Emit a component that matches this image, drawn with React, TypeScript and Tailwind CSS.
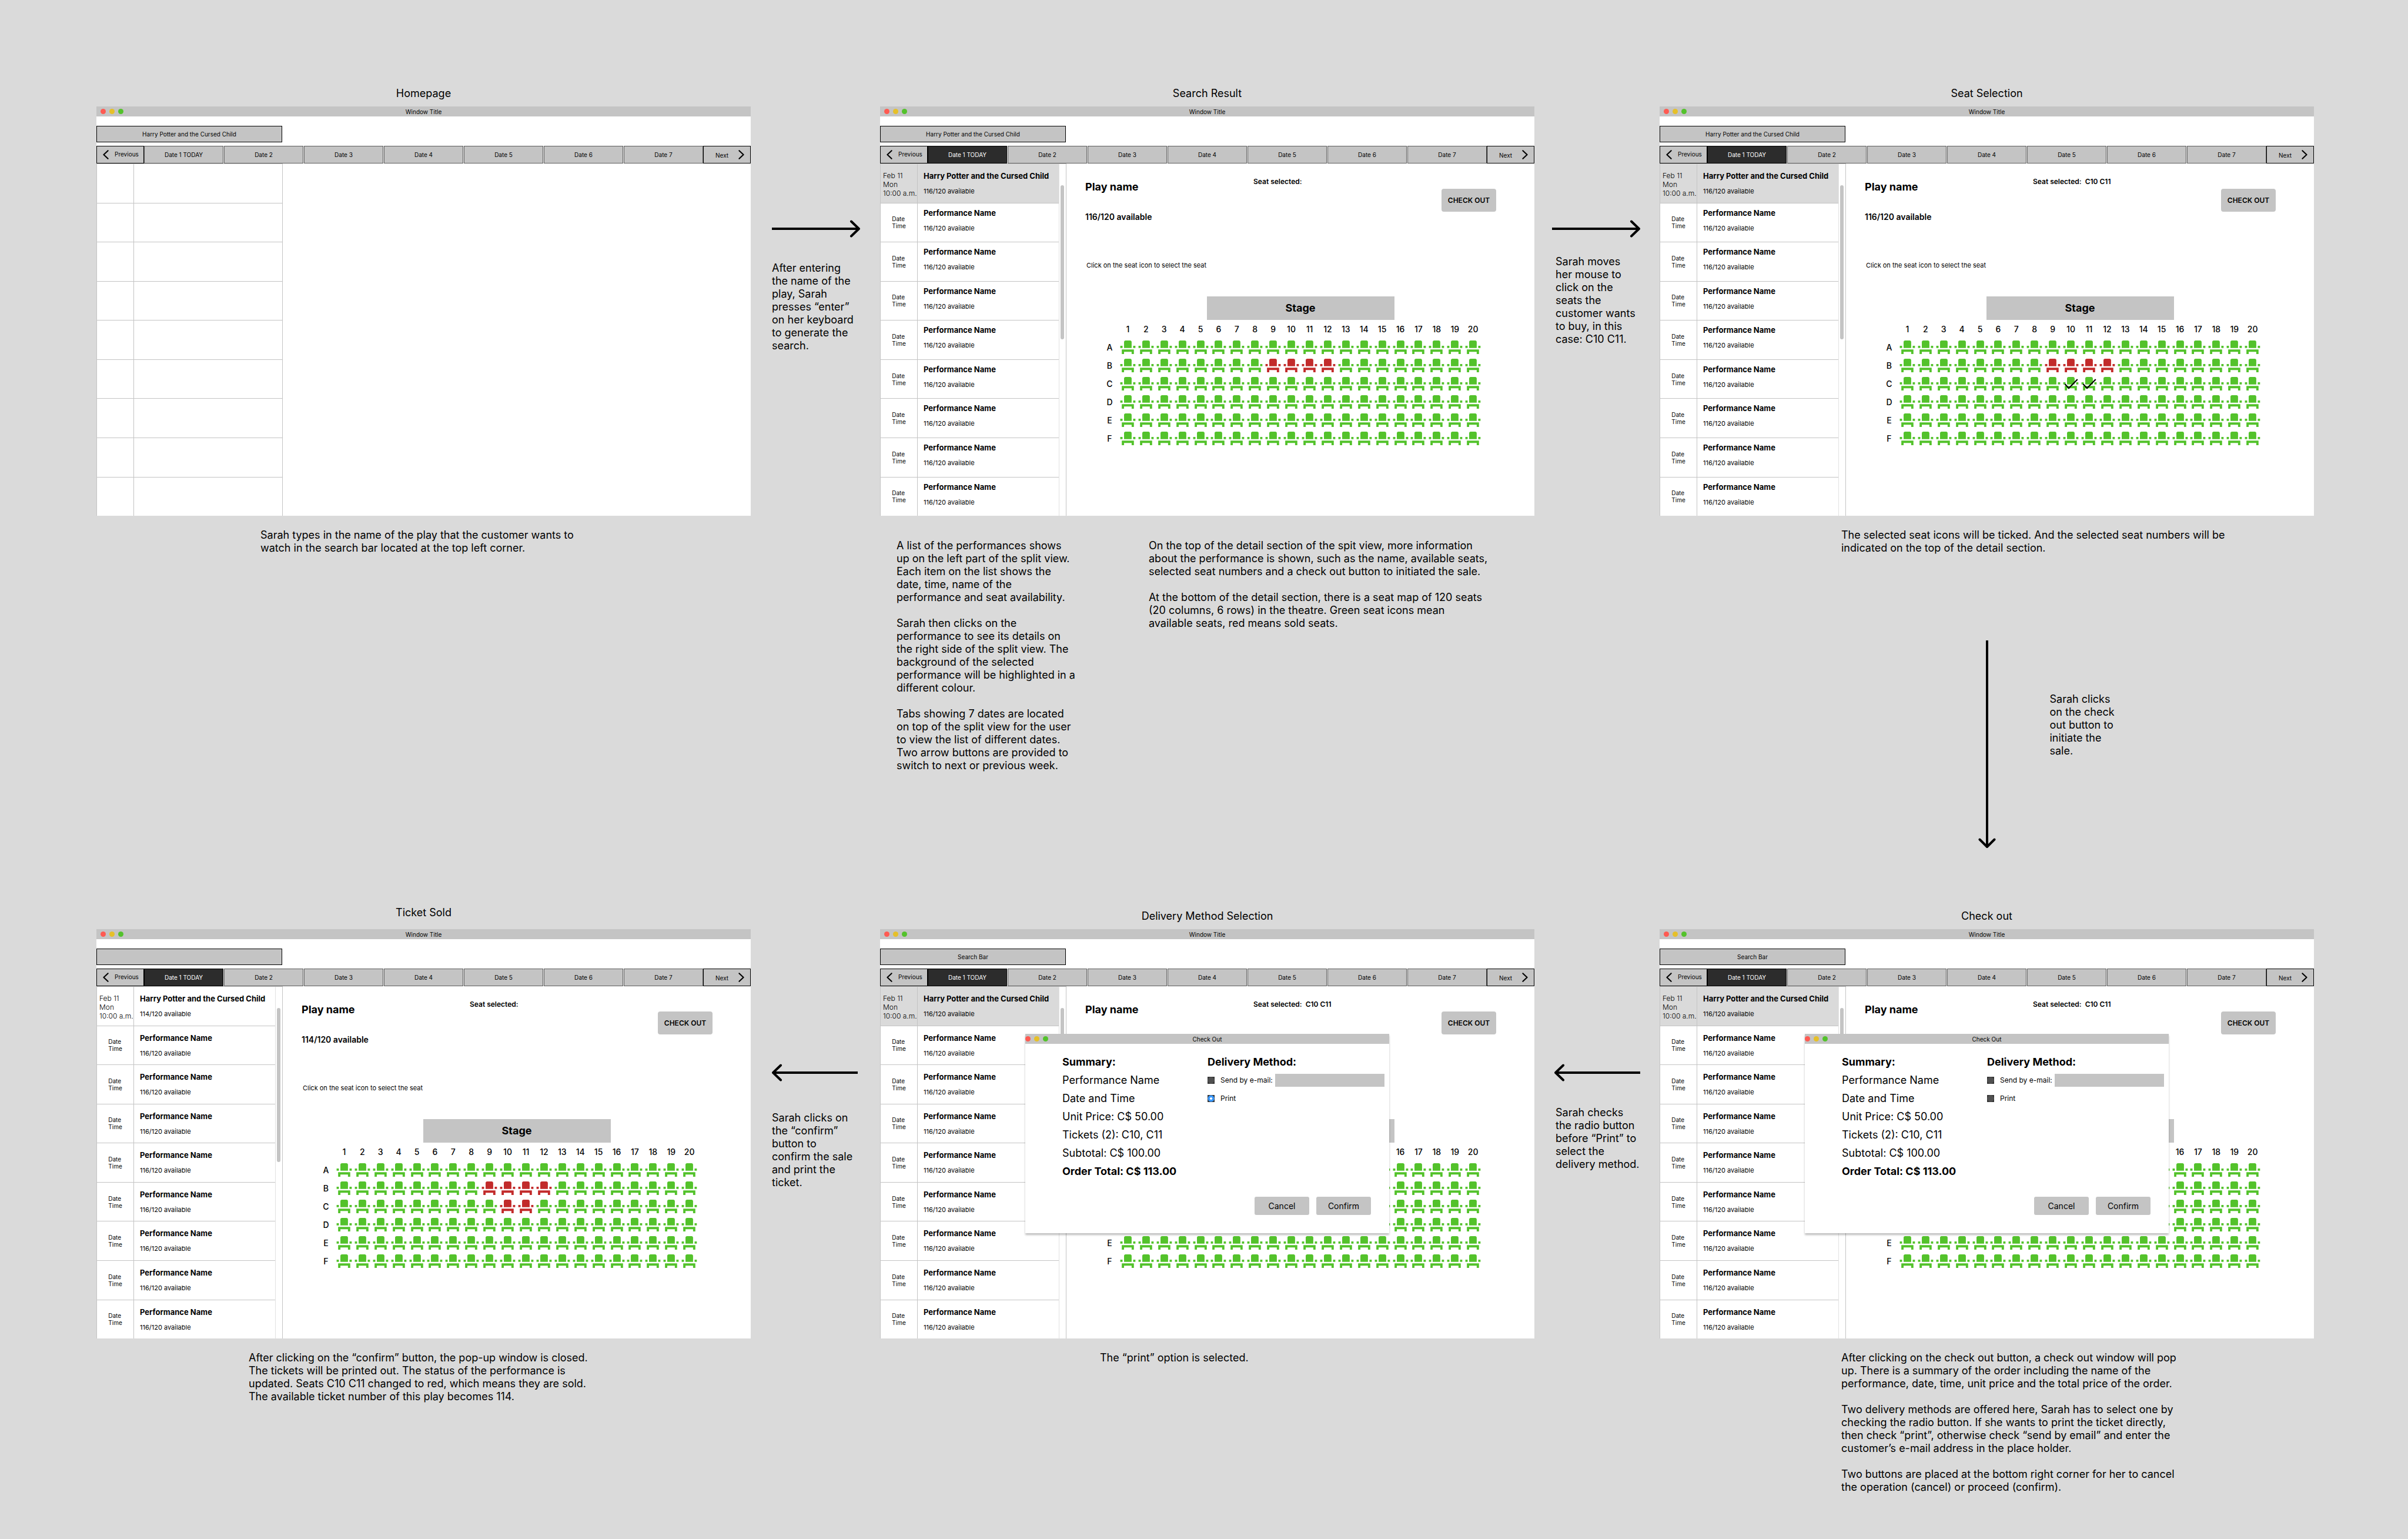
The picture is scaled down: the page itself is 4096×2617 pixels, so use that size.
import React, { useId } from "react";

type FrameKind = "home" | "result" | "selection" | "checkout" | "delivery" | "sold";

const COLUMNS = Array.from({ length: 20 }, (_, i) => i + 1);
const ROWS = ["A", "B", "C", "D", "E", "F"];
const DATES = ["Date 1 TODAY", "Date 2", "Date 3", "Date 4", "Date 5", "Date 6", "Date 7"];

function TrafficLights() {
  return (
    <div className="absolute inset-y-0 left-0 flex items-center gap-1.5">
      <span className="size-[9px] rounded-full bg-[#ff5a52]" />
      <span className="size-[9px] rounded-full bg-[#e6c029]" />
      <span className="size-[9px] rounded-full bg-[#53c22b]" />
    </div>
  );
}

function TitleBar({ title, inset }: { title: string; inset?: boolean }) {
  return (
    <div className="h-[17px] bg-[#c4c4c4] px-[7px]">
      <div className={inset ? "relative flex h-full items-center justify-center" : "relative -mx-[7px] flex h-full items-center justify-center"}>
        <TrafficLights />
        <span className="text-[10px] leading-3">{title}</span>
      </div>
    </div>
  );
}

function Chevron({ flip }: { flip?: boolean }) {
  return (
    <svg viewBox="0 0 12 20" className="h-4 w-2.5 shrink-0" fill="none" stroke="black" strokeWidth="2.6" strokeLinecap="round" strokeLinejoin="round" aria-hidden="true">
      <path d={flip ? "M1.5 1.5 L10.5 10 L1.5 18.5" : "M10.5 1.5 L1.5 10 L10.5 18.5"} />
    </svg>
  );
}

function DateTabs({ active }: { active: boolean }) {
  return (
    <div className="flex h-[30px] text-[10px]">
      <button className="flex w-[81px] items-center gap-2.5 border border-black bg-[#c4c4c4] pl-2.5">
        <Chevron />
        <span className="pb-0.5">Previous</span>
      </button>
      <div className="flex flex-1 gap-px">
        {DATES.map((d, i) => (
          <button
            key={d}
            className={
              active && i === 0
                ? "flex-1 border border-black bg-[#2c2c2c] text-white"
                : "flex-1 border border-[#5c5c5c] bg-[#c4c4c4]"
            }
          >
            {d}
          </button>
        ))}
      </div>
      <button className="flex w-[81px] items-center justify-between border border-black bg-[#c4c4c4] pr-2.5 pl-5">
        <span className="pt-0.5">Next</span>
        <Chevron flip />
      </button>
    </div>
  );
}

function EmptyList() {
  return (
    <ul className="flex w-[317px] shrink-0 flex-col border border-b-0 border-[#c4c4c4]">
      {Array.from({ length: 9 }, (_, i) => (
        <li key={i} className="flex flex-1 border-b border-[#c4c4c4] last:border-b-0">
          <div className="w-[63px] border-r border-[#c4c4c4]" />
        </li>
      ))}
    </ul>
  );
}

function PerformanceList({ firstAvailable, highlight, tight }: { firstAvailable: string; highlight: boolean; tight: boolean }) {
  return (
    <div className="flex w-[317px] shrink-0 border border-b-0 border-[#c4c4c4]">
      <ul className="flex flex-1 flex-col border-r border-[#e2e2e2]">
        {Array.from({ length: 9 }, (_, i) => {
          const first = i === 0;
          return (
            <li
              key={i}
              className={
                first && highlight
                  ? "flex flex-1 border-b border-[#c4c4c4] bg-[#dadada]"
                  : "flex flex-1 border-b border-[#c4c4c4] last:border-b-0"
              }
            >
              {first ? (
                <div className="w-[63px] border-r border-[#c4c4c4] pt-3 pl-1 text-xs leading-[15px] font-light whitespace-nowrap">
                  Feb 11
                  <br />
                  Mon
                  <br />
                  10:00 a.m.
                </div>
              ) : (
                <div className="flex w-[63px] items-center justify-center border-r border-[#c4c4c4] text-[10px] leading-3">
                  <div>
                    Date
                    <br />
                    Time
                  </div>
                </div>
              )}
              <div className={tight && !first ? "flex-1 pt-2 pl-2.5 whitespace-nowrap" : "flex-1 pt-3 pl-2.5 whitespace-nowrap"}>
                <h3 className="text-[13px] leading-4 font-bold">
                  {first ? "Harry Potter and the Cursed Child" : "Performance Name"}
                </h3>
                <p className="mt-2.5 text-[11px] leading-4">{first ? firstAvailable : "116/120 available"}</p>
              </div>
            </li>
          );
        })}
      </ul>
      <div className="w-[11px] pt-9 pl-0.5">
        <div className="h-[262px] w-1.5 rounded-full bg-[#c4c4c4]" />
      </div>
    </div>
  );
}

function Seat({ name, sold, ticked }: { name: string; sold: boolean; ticked: boolean }) {
  return (
    <button aria-label={"Seat " + name} className="block h-[31px]">
      <svg viewBox="0 0 24 24" className="size-full" aria-hidden="true">
        <path
          className={sold ? "fill-[#c22b2b]" : "fill-[#53c22b]"}
          d="M4 18v3h3v-3h10v3h3v-6H4zM19 10h3v3h-3zM2 10h3v3H2zM17 13H7V5c0-1.1.9-2 2-2h6c1.1 0 2 .9 2 2z"
        />
        {ticked && <path d="M4.2 12.4 L9.3 18 L20.8 6.2" fill="none" stroke="black" strokeWidth="1.7" />}
      </svg>
    </button>
  );
}

function SeatMap({ sold, ticked }: { sold: string[]; ticked: string[] }) {
  return (
    <div className="mx-auto grid w-[680px] grid-cols-22 text-sm font-medium">
      <span />
      {COLUMNS.map((c) => (
        <span key={c} className="flex h-[31px] items-center justify-center">
          {c}
        </span>
      ))}
      <span />
      {ROWS.map((r) => (
        <React.Fragment key={r}>
          <span className="flex h-[31px] items-center justify-center">{r}</span>
          {COLUMNS.map((c) => (
            <Seat key={c} name={r + c} sold={sold.includes(r + c)} ticked={ticked.includes(r + c)} />
          ))}
          <span />
        </React.Fragment>
      ))}
    </div>
  );
}

function Detail({ available, selected, sold, ticked }: { available: string; selected: string; sold: string[]; ticked: string[] }) {
  return (
    <section className="flex-1">
      <div className="grid grid-cols-[286px_1fr_auto] pr-[65px] pl-8">
        <div className="pt-[26px] whitespace-nowrap">
          <h2 className="text-lg leading-7 font-bold">Play name</h2>
          <p className="mt-[25px] text-sm leading-6 font-semibold">{available}</p>
          <p className="mt-[62px] pl-0.5 text-[11px] leading-4">Click on the seat icon to select the seat</p>
        </div>
        <p className="pt-[23px] text-xs leading-4 font-semibold whitespace-pre">{"Seat selected:  " + selected}</p>
        <div className="pt-[43px]">
          <button className="h-[39px] w-[93px] rounded bg-[#c4c4c4] text-xs font-semibold">CHECK OUT</button>
        </div>
      </div>
      <div className="mx-auto mt-[45px] flex h-10 w-[319px] items-center justify-center bg-[#c4c4c4] text-lg font-bold">
        Stage
      </div>
      <SeatMap sold={sold} ticked={ticked} />
    </section>
  );
}

const radioBase =
  "size-3 shrink-0 appearance-none bg-[#333333] bg-[radial-gradient(circle,#505050_5px,#333333_6px)] checked:bg-[radial-gradient(circle,#ffffff_2px,#3b99fc_2px,#3b99fc_5px,#333333_6px)]";

function CheckoutDialog({ printChecked }: { printChecked: boolean }) {
  const id = useId();
  return (
    <div role="dialog" aria-label="Check Out" className="absolute inset-x-0 top-[178px] mx-auto w-[619px] bg-white shadow-[0_3px_3px_rgba(0,0,0,0.25)]">
      <TitleBar title="Check Out" />
      <div className="grid grid-cols-[247px_minmax(0,1fr)] pt-[15px] pr-2 pl-[63px]">
        <div className="text-lg leading-[31px] whitespace-nowrap">
          <h2 className="font-bold">Summary:</h2>
          <p>Performance Name</p>
          <p>Date and Time</p>
          <p>Unit Price: C$ 50.00</p>
          <p>Tickets (2): C10, C11</p>
          <p>Subtotal: C$ 100.00</p>
          <p className="font-bold">Order Total: C$ 113.00</p>
        </div>
        <div>
          <h2 className="text-lg leading-[31px] font-bold">Delivery Method:</h2>
          <div className="flex h-[31px] items-center text-xs">
            <input type="radio" id={id + "mail"} name={id} className={radioBase} />
            <label htmlFor={id + "mail"} className="w-[103px] shrink-0 pl-2.5 whitespace-nowrap">
              Send by e-mail:
            </label>
            <input type="email" aria-label="E-mail address" className="h-[22px] min-w-0 flex-1 bg-[#c4c4c4]" />
          </div>
          <div className="flex h-[31px] items-center text-xs">
            <input type="radio" id={id + "print"} name={id} defaultChecked={printChecked} className={radioBase} />
            <label htmlFor={id + "print"} className="pl-2.5">
              Print
            </label>
          </div>
        </div>
      </div>
      <div className="mt-7 flex justify-end gap-3 pr-[31px] pb-[31px] text-sm">
        <button className="h-[31px] w-[93px] rounded-[3px] bg-[#c4c4c4]">Cancel</button>
        <button className="h-[31px] w-[93px] rounded-[3px] bg-[#c4c4c4]">Confirm</button>
      </div>
    </div>
  );
}

const SOLD = ["B9", "B10", "B11", "B12"];
const PICKED = ["C10", "C11"];

function AppWindow({ kind, search }: { kind: FrameKind; search: string }) {
  const picked = kind === "selection" || kind === "checkout" || kind === "delivery";
  const available = kind === "sold" ? "114/120 available" : "116/120 available";
  return (
    <div className="relative bg-white">
      <TitleBar title="Window Title" inset />
      <input
        type="text"
        aria-label="Search"
        defaultValue={search}
        className="mt-4 block h-7 w-[316px] border border-black bg-[#c4c4c4] text-center text-[10px]"
      />
      <div className="mt-1.5">
        <DateTabs active={kind !== "home"} />
      </div>
      <div className="flex min-h-[599px]">
        {kind === "home" ? (
          <EmptyList />
        ) : (
          <>
            <PerformanceList
              firstAvailable={available}
              highlight={kind !== "sold"}
              tight={kind === "result" || kind === "selection"}
            />
            <Detail
              available={available}
              selected={picked ? "C10 C11" : ""}
              sold={kind === "sold" ? [...SOLD, ...PICKED] : SOLD}
              ticked={picked ? PICKED : []}
            />
          </>
        )}
      </div>
      {(kind === "checkout" || kind === "delivery") && <CheckoutDialog printChecked={kind === "delivery"} />}
    </div>
  );
}

function RightArrow() {
  return (
    <svg viewBox="0 0 150 30" className="h-[30px] w-[150px]" fill="none" stroke="black" strokeWidth="4" strokeLinejoin="round" aria-hidden="true">
      <path d="M0 15 H148" />
      <path d="M135 2.5 L148 15 L135 27.5" strokeLinecap="round" />
    </svg>
  );
}

function LeftArrow() {
  return (
    <svg viewBox="0 0 146 30" className="h-[30px] w-[146px]" fill="none" stroke="black" strokeWidth="4" strokeLinejoin="round" aria-hidden="true">
      <path d="M146 15 H2" />
      <path d="M15 2.5 L2 15 L15 27.5" strokeLinecap="round" />
    </svg>
  );
}

function DownArrow() {
  return (
    <svg viewBox="0 0 30 354" className="h-[354px] w-[30px]" fill="none" stroke="black" strokeWidth="4" strokeLinejoin="round" aria-hidden="true">
      <path d="M15 0 V351" />
      <path d="M2.5 338.5 L15 351 L27.5 338.5" strokeLinecap="round" />
    </svg>
  );
}

function Note({ text }: { text: string }) {
  return <p className="text-lg leading-[22px] whitespace-pre">{text}</p>;
}

export default function App() {
  return (
    <main className="min-h-screen bg-[#dadada] pt-[147px] pr-[160px] pl-[164px] font-['Inter',sans-serif] text-black [font-optical-sizing:none]">
      <section className="grid grid-cols-[1fr_220px_1fr_213px_1fr]">
        <div>
          <h1 className="mb-2.5 text-center text-lg leading-6">Homepage</h1>
          <AppWindow kind="home" search="Harry Potter and the Cursed Child" />
          <div className="mt-[22px] pl-[279px]">
            <Note text={"Sarah types in the name of the play that the customer wants to\nwatch in the search bar located at the top left corner."} />
          </div>
        </div>

        <div className="flex flex-col gap-[41px] pt-[227px] pl-9">
          <RightArrow />
          <Note text={"After entering\nthe name of the\nplay, Sarah\npresses “enter”\non her keyboard\nto generate the\nsearch."} />
        </div>

        <div>
          <h1 className="mb-2.5 text-center text-lg leading-6">Search Result</h1>
          <AppWindow kind="result" search="Harry Potter and the Cursed Child" />
          <div className="mt-10 grid grid-cols-[429px_1fr] pl-7">
            <div className="flex flex-col gap-[22px]">
              <Note text={"A list of the performances shows\nup on the left part of the split view.\nEach item on the list shows the\ndate, time, name of the\nperformance and seat availability."} />
              <Note text={"Sarah then clicks on the\nperformance to see its details on\nthe right side of the split view. The\nbackground of the selected\nperformance will be highlighted in a\ndifferent colour."} />
              <Note text={"Tabs showing 7 dates are located\non top of the split view for the user\nto view the list of different dates.\nTwo arrow buttons are provided to\nswitch to next or previous week."} />
            </div>
            <div className="flex flex-col gap-[22px]">
              <Note text={"On the top of the detail section of the spit view, more information\nabout the performance is shown, such as the name, available seats,\nselected seat numbers and a check out button to initiated the sale."} />
              <Note text={"At the bottom of the detail section, there is a seat map of 120 seats\n(20 columns, 6 rows) in the theatre. Green seat icons mean\navailable seats, red means sold seats."} />
            </div>
          </div>
        </div>

        <div className="flex flex-col gap-[30px] pt-[227px] pl-[30px]">
          <RightArrow />
          <div className="pl-1.5">
            <Note text={"Sarah moves\nher mouse to\nclick on the\nseats the\ncustomer wants\nto buy, in this\ncase: C10 C11."} />
          </div>
        </div>

        <div>
          <h1 className="mb-2.5 text-center text-lg leading-6">Seat Selection</h1>
          <AppWindow kind="selection" search="Harry Potter and the Cursed Child" />
          <div className="mt-[22px] pl-[309px]">
            <Note text={"The selected seat icons will be ticked. And the selected seat numbers will be\nindicated on the top of the detail section."} />
          </div>
          <div className="mt-[146px] grid grid-cols-[1fr_30px_1fr]">
            <span />
            <DownArrow />
            <div className="pt-[89px] pl-[92px]">
              <Note text={"Sarah clicks\non the check\nout button to\ninitiate the\nsale."} />
            </div>
          </div>
        </div>
      </section>

      <section className="mt-[97px] grid grid-cols-[1fr_220px_1fr_213px_1fr]">
        <div>
          <h1 className="pb-4 text-center text-lg leading-6">Ticket Sold</h1>
          <AppWindow kind="sold" search="" />
          <div className="mt-[22px] pl-[259px]">
            <Note text={"After clicking on the “confirm” button, the pop-up window is closed.\nThe tickets will be printed out. The status of the performance is\nupdated. Seats C10 C11 changed to red, which means they are sold.\nThe available ticket number of this play becomes 114."} />
          </div>
        </div>

        <div className="flex flex-col gap-[51px] pt-[269px] pl-9">
          <LeftArrow />
          <Note text={"Sarah clicks on\nthe “confirm”\nbutton to\nconfirm the sale\nand print the\nticket."} />
        </div>

        <div>
          <h1 className="pt-1.5 pb-2.5 text-center text-lg leading-6">Delivery Method Selection</h1>
          <AppWindow kind="delivery" search="Search Bar" />
          <div className="mt-[22px] pl-[374px]">
            <Note text={"The “print” option is selected."} />
          </div>
        </div>

        <div className="flex flex-col gap-[42px] pt-[269px] pl-[34px]">
          <LeftArrow />
          <div className="pl-0.5">
            <Note text={"Sarah checks\nthe radio button\nbefore “Print” to\nselect the\ndelivery method."} />
          </div>
        </div>

        <div>
          <h1 className="pt-1.5 pb-2.5 text-center text-lg leading-6">Check out</h1>
          <AppWindow kind="checkout" search="Search Bar" />
          <div className="mt-[22px] flex flex-col gap-[22px] pl-[309px]">
            <Note text={"After clicking on the check out button, a check out window will pop\nup. There is a summary of the order including the name of the\nperformance, date, time, unit price and the total price of the order."} />
            <Note text={"Two delivery methods are offered here, Sarah has to select one by\nchecking the radio button. If she wants to print the ticket directly,\nthen check “print”, otherwise check “send by email” and enter the\ncustomer’s e-mail address in the place holder."} />
            <Note text={"Two buttons are placed at the bottom right corner for her to cancel\nthe operation (cancel) or proceed (confirm)."} />
          </div>
        </div>
      </section>
    </main>
  );
}
